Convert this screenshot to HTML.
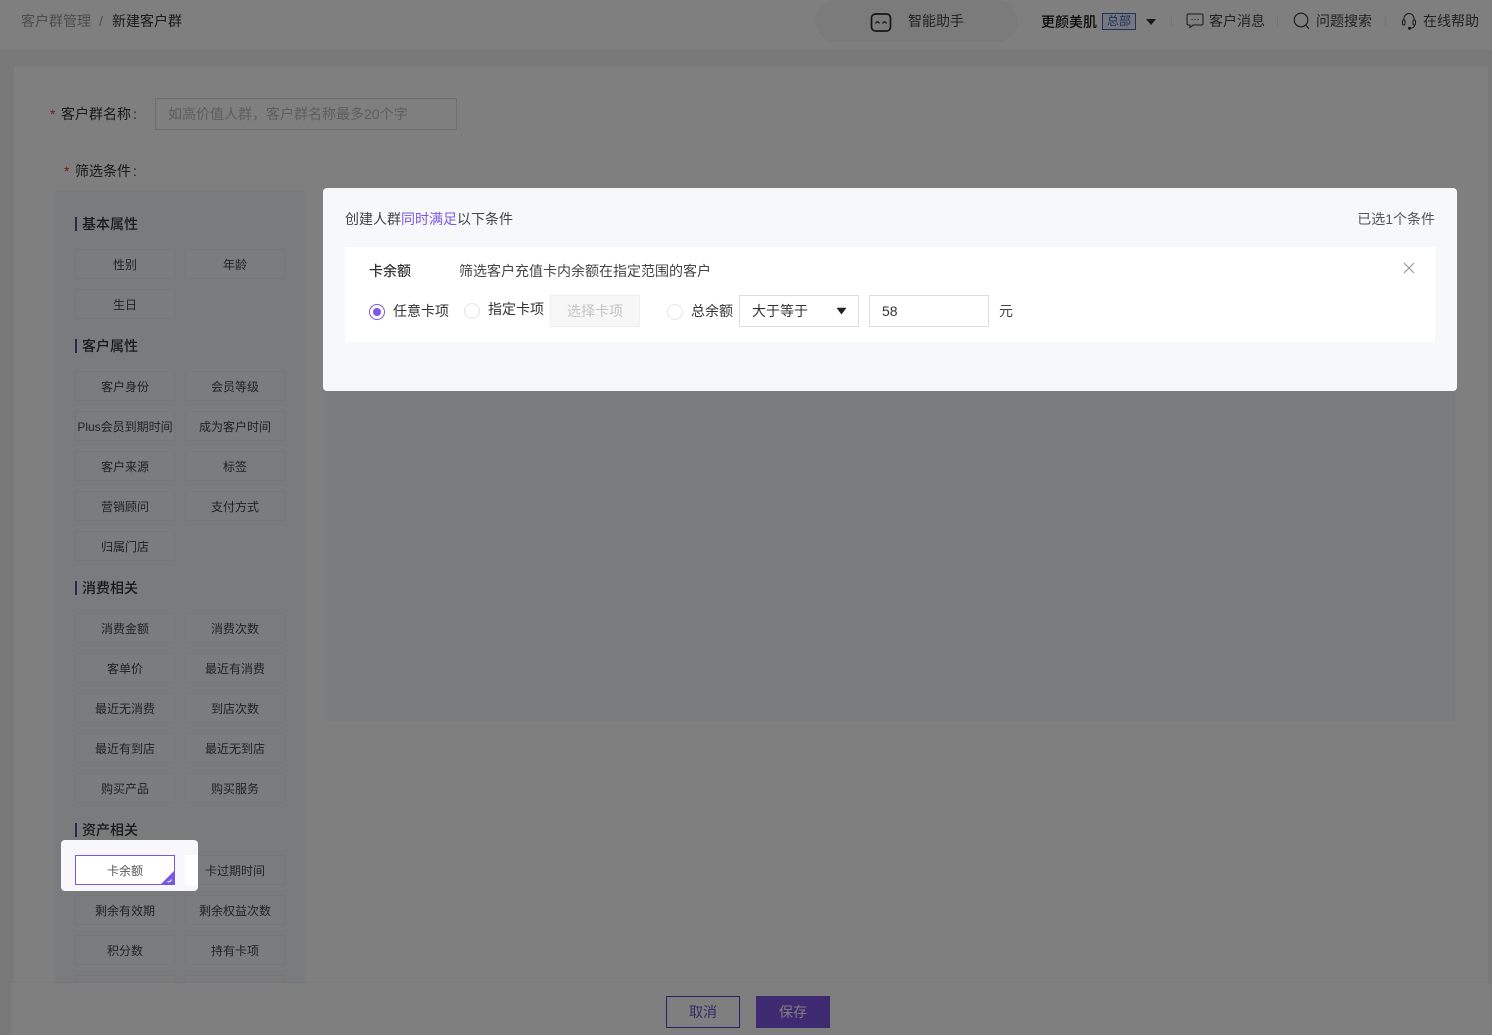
<!DOCTYPE html>
<html lang="zh-CN"><head><meta charset="utf-8"><title>新建客户群</title>
<style>
*{box-sizing:border-box;margin:0;padding:0}
html,body{width:1492px;height:1035px;overflow:hidden}
body{position:relative;background:#f3f3f4;font-family:"Liberation Sans","Noto Sans CJK SC",sans-serif;font-size:14px;color:#333}
.a{position:absolute;white-space:nowrap}
.t{position:absolute;white-space:nowrap;line-height:20px}
.b{position:absolute;width:100px;height:30px;border:1px solid #eee;border-radius:2px;background:#f7f8fa;font-size:12px;line-height:30px;text-align:center;color:#444;white-space:nowrap;overflow:hidden}
.h{position:absolute;left:82px;font-size:14px;font-weight:500;line-height:20px;color:#333}
.h:before{content:"";position:absolute;left:-7px;top:3px;width:2px;height:14px;background:#5c46a8}
.ov{position:absolute;left:0;top:0;width:1492px;height:1035px;background:rgba(0,0,0,.5)}
.r{position:absolute;width:16px;height:16px;border:1px solid #e4e4e4;border-radius:50%;background:#fff}
.c{margin-left:2px}
</style></head><body>
<div class="a" style="left:0;top:0;width:1492px;height:49px;background:#fff"></div>
<div class="t" style="left:21px;top:11px;color:#999">客户群管理</div>
<div class="t" style="left:99px;top:11px;color:#999">/</div>
<div class="t" style="left:112px;top:11px;color:#333">新建客户群</div>
<div class="a" style="left:815px;top:0;width:203px;height:42px;border-radius:21px;background:#f6f7f9"></div>
<svg class="a" style="left:870px;top:12px" width="22" height="20" viewBox="0 0 22 20" fill="none" stroke="#2a2a2a" stroke-width="1.700"><rect x="1.500" y="2" width="19" height="17" rx="4"/><path d="M5.500 11.500q2-3.500 4 0M12.500 11.500q2-3.500 4 0" stroke-width="1.200"/></svg>
<div class="t" style="left:908px;top:11px;color:#444">智能助手</div>
<div class="t" style="left:1041px;top:12px;color:#111;font-weight:500">更颜美肌</div>
<div class="a" style="left:1102px;top:13px;width:34px;height:17px;border:1px solid #3f63b8;background:#e8eefc;color:#3f63b8;font-size:12px;line-height:14px;text-align:center">总部</div>
<svg class="a" style="left:1146px;top:19px" width="10" height="7"><path d="M0 0h10L5 6z" fill="#333"/></svg>
<div class="a" style="left:1171px;top:16px;width:1px;height:10px;background:#e6e6e6"></div>
<svg class="a" style="left:1186px;top:13px" width="18" height="16" viewBox="0 0 18 16" fill="none" stroke="#333" stroke-width="1"><path d="M2.500 1h13a1.500 1.500 0 0 1 1.500 1.500v8a1.500 1.500 0 0 1-1.500 1.500H7l-3 2.500V12H2.500A1.500 1.500 0 0 1 1 10.500v-8A1.500 1.500 0 0 1 2.500 1z"/><path d="M5.500 6.500h1M8.500 6.500h1M11.500 6.500h1"/></svg>
<div class="t" style="left:1209px;top:11px;color:#444">客户消息</div>
<div class="a" style="left:1277px;top:16px;width:1px;height:10px;background:#e6e6e6"></div>
<svg class="a" style="left:1293px;top:12px" width="18" height="18" viewBox="0 0 18 18" fill="none" stroke="#333" stroke-width="1.100"><circle cx="8" cy="8" r="6.800"/><path d="M12.800 13l3.200 3.800"/></svg>
<div class="t" style="left:1316px;top:11px;color:#444">问题搜索</div>
<div class="a" style="left:1385px;top:16px;width:1px;height:10px;background:#e6e6e6"></div>
<svg class="a" style="left:1400px;top:12px" width="18" height="18" viewBox="0 0 18 18" fill="none" stroke="#333" stroke-width="1"><path d="M4 8V6.500a5 5 0 0 1 10 0V8"/><rect x="2.500" y="8" width="2.500" height="5" rx="1.200"/><rect x="13" y="8" width="2.500" height="5" rx="1.200"/><path d="M14.500 13q0 3-4 3.200"/><circle cx="9.500" cy="16.300" r="1" fill="#333"/></svg>
<div class="t" style="left:1423px;top:11px;color:#444">在线帮助</div>

<div class="a" style="left:14px;top:66px;width:1474px;height:930px;background:#fff"></div>
<div class="t" style="left:50px;top:104px;color:#e03a3a;font-size:14px">*</div>
<div class="t" style="left:61px;top:104px;color:#333">客户群名称<span class="c">:</span></div>
<div class="a" style="left:155px;top:98px;width:302px;height:32px;border:1px solid #ddd;background:#fff;color:#bbb;line-height:30px;padding-left:12px">如高价值人群，客户群名称最多20个字</div>
<div class="t" style="left:64px;top:161px;color:#e03a3a;font-size:14px">*</div>
<div class="t" style="left:75px;top:161px;color:#333">筛选条件<span class="c">:</span></div>

<div class="a" style="left:55px;top:190px;width:250px;height:800px;background:#f5f7fa"></div>
<div class="a" style="left:324px;top:190px;width:1131px;height:531px;background:#f7f8fa"></div>

<div class="h" style="top:214px">基本属性</div>
<div class="b" style="left:75px;top:249px">性别</div><div class="b" style="left:185px;top:249px">年龄</div>
<div class="b" style="left:75px;top:289px">生日</div>
<div class="h" style="top:336px">客户属性</div>
<div class="b" style="left:75px;top:371px">客户身份</div><div class="b" style="left:185px;top:371px">会员等级</div>
<div class="b" style="left:75px;top:411px">Plus会员到期时间</div><div class="b" style="left:185px;top:411px">成为客户时间</div>
<div class="b" style="left:75px;top:451px">客户来源</div><div class="b" style="left:185px;top:451px">标签</div>
<div class="b" style="left:75px;top:491px">营销顾问</div><div class="b" style="left:185px;top:491px">支付方式</div>
<div class="b" style="left:75px;top:531px">归属门店</div>
<div class="h" style="top:578px">消费相关</div>
<div class="b" style="left:75px;top:613px">消费金额</div><div class="b" style="left:185px;top:613px">消费次数</div>
<div class="b" style="left:75px;top:653px">客单价</div><div class="b" style="left:185px;top:653px">最近有消费</div>
<div class="b" style="left:75px;top:693px">最近无消费</div><div class="b" style="left:185px;top:693px">到店次数</div>
<div class="b" style="left:75px;top:733px">最近有到店</div><div class="b" style="left:185px;top:733px">最近无到店</div>
<div class="b" style="left:75px;top:773px">购买产品</div><div class="b" style="left:185px;top:773px">购买服务</div>
<div class="h" style="top:820px">资产相关</div>
<div class="b" style="left:185px;top:855px">卡过期时间</div>
<div class="b" style="left:75px;top:895px">剩余有效期</div><div class="b" style="left:185px;top:895px">剩余权益次数</div>
<div class="b" style="left:75px;top:935px">积分数</div><div class="b" style="left:185px;top:935px">持有卡项</div>
<div class="b" style="left:75px;top:975px"></div><div class="b" style="left:185px;top:975px"></div>

<div class="a" style="left:11px;top:983px;width:1481px;height:52px;background:#fff;box-shadow:0 -1px 2px rgba(0,0,0,.04)"></div>
<div class="a" style="left:666px;top:996px;width:74px;height:32px;border:1px solid #5a3fc0;background:#fff;color:#6a4fd0;line-height:30px;text-align:center">取消</div>
<div class="a" style="left:756px;top:996px;width:74px;height:32px;background:#7a55e0;color:#fff;line-height:32px;text-align:center">保存</div>

<div class="ov"></div>

<div class="a" style="left:61px;top:840px;width:137px;height:51px;border-radius:4px;background:#f8f8fc;overflow:hidden">
  <div class="a" style="left:124px;top:15px;width:13px;height:30px;background:#fff"></div>
  <div class="a" style="left:14px;top:15px;width:100px;height:30px;border:1px solid #7b57e6;background:#fff;font-size:12px;line-height:30px;text-align:center;color:#555">卡余额</div>
  <svg class="a" style="left:99px;top:30px" width="15" height="15"><path d="M15 0v15H0z" fill="#7b57e6"/><path d="M7.500 11.500q2.500 1 4-2" stroke="#fff" fill="none"/></svg>
</div>

<div class="a" style="left:323px;top:188px;width:1134px;height:203px;border-radius:4px;background:#f7f8fa"></div>
<div class="t" style="left:345px;top:208.500px;color:#444">创建人群<span style="color:#7b57e6">同时满足</span>以下条件</div>
<div class="t" style="right:57px;top:208.500px;color:#555">已选1个条件</div>
<div class="a" style="left:345px;top:247px;width:1090px;height:95px;background:#fff"></div>
<div class="t" style="left:369px;top:261px;color:#333;font-weight:500">卡余额</div>
<div class="t" style="left:459px;top:261px;color:#444">筛选客户充值卡内余额在指定范围的客户</div>
<svg class="a" style="left:1403px;top:262px" width="12" height="12" fill="none" stroke="#999" stroke-width="1.200"><path d="M1 1l10 10M11 1L1 11"/></svg>
<div class="r" style="left:369px;top:304px;border-color:#7b57e6"></div>
<div class="a" style="left:373px;top:308px;width:8px;height:8px;border-radius:50%;background:#7b57e6"></div>
<div class="t" style="left:393px;top:301px;color:#333">任意卡项</div>
<div class="r" style="left:464px;top:303px"></div>
<div class="t" style="left:488px;top:299px;color:#333">指定卡项</div>
<div class="a" style="left:550px;top:295px;width:90px;height:32px;border:1px solid #eee;background:#f7f7f7;color:#c4c4c4;line-height:30px;text-align:center">选择卡项</div>
<div class="r" style="left:667px;top:304px"></div>
<div class="t" style="left:691px;top:301px;color:#333">总余额</div>
<div class="a" style="left:739px;top:295px;width:120px;height:32px;border:1px solid #ddd;background:#fff;color:#333;line-height:30px;padding-left:12px">大于等于</div>
<svg class="a" style="left:836px;top:307px" width="11" height="8"><path d="M1 1h9L5.500 7z" fill="#222" stroke="#222" stroke-width=".6" stroke-linejoin="round"/></svg>
<div class="a" style="left:869px;top:295px;width:120px;height:32px;border:1px solid #ddd;background:#fff;color:#333;line-height:30px;padding-left:12px">58</div>
<div class="t" style="left:999px;top:301px;color:#444">元</div>
</body></html>
